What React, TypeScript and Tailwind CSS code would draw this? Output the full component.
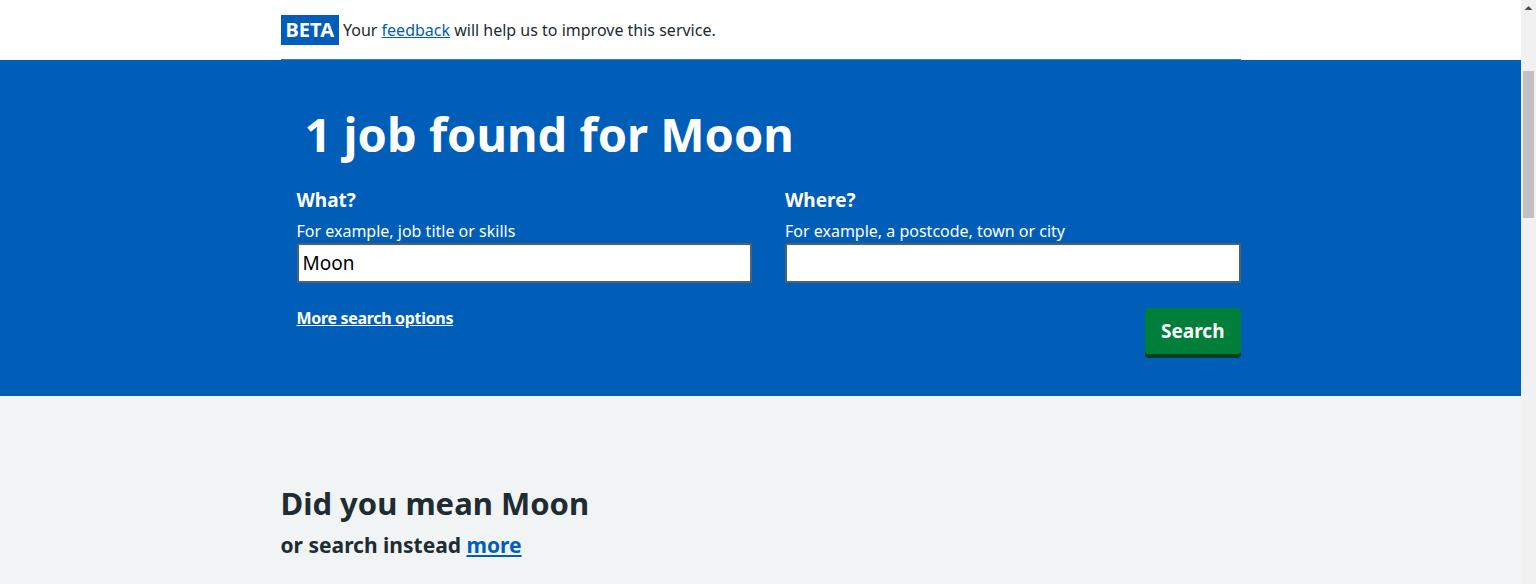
export default function App() {
  return (
    <div
      className="flex text-[#212b32]"
      style={{ fontFamily: '"Noto Sans", Arial, sans-serif' }}
    >
      <div className="min-h-[2180px] flex-1 bg-[#f0f4f5]">
        <header className="bg-white">
          <div className="mx-auto flex h-[60px] max-w-[960px] items-center border-b border-[#3b7bc4]">
            <strong className="mr-[4px] flex h-[30px] items-center bg-[#005eb8] px-[5px] text-[20px] font-bold leading-none text-white">
              BETA
            </strong>
            <p className="text-[16px] leading-none">
              Your{" "}
              <a href="#" className="text-[#005eb8] underline">
                feedback
              </a>{" "}
              will help us to improve this service.
            </p>
          </div>
        </header>

        <section className="bg-[#005eb8] text-white">
          <div className="mx-auto max-w-[960px] pb-[42px] pl-4 pt-[46px]">
            <h1 className="pl-2 text-[47px] font-bold leading-[1.2]">
              1 job found for Moon
            </h1>

            <form className="mt-[25px] grid grid-cols-2 gap-x-[33px]">
              <div>
                <label className="block text-[19px] font-bold leading-[1.4]">
                  What?
                </label>
                <span className="mt-[5px] block text-[16px] leading-[1.5]">
                  For example, job title or skills
                </span>
                <input
                  type="text"
                  defaultValue="Moon"
                  className="h-[40px] w-full border-2 border-[#4c6272] bg-white px-1 text-[19px] text-black outline-none"
                />
                <a
                  href="#"
                  className="mt-[23px] inline-block text-[16px] font-bold tracking-[-0.02em] underline"
                >
                  More search options
                </a>
              </div>
              <div>
                <label className="block text-[19px] font-bold leading-[1.4]">
                  Where?
                </label>
                <span className="mt-[5px] block text-[16px] leading-[1.5]">
                  For example, a postcode, town or city
                </span>
                <input
                  type="text"
                  className="h-[40px] w-full border-2 border-[#4c6272] bg-white px-1 text-[19px] text-black outline-none"
                />
                <div className="mt-[25px] flex justify-end">
                  <button
                    type="button"
                    className="h-[46px] rounded-[4px] bg-[#007f3b] px-[16px] text-[19px] font-bold text-white shadow-[0_4px_0_#00401e]"
                  >
                    Search
                  </button>
                </div>
              </div>
            </form>
          </div>
        </section>

        <main className="mx-auto max-w-[960px] pt-[88px]">
          <h2 className="text-[31px] font-bold leading-[1.25]">
            Did you mean Moon
          </h2>
          <p className="mt-[8px] text-[21px] font-bold leading-[1.4]">
            or search instead{" "}
            <a href="#" className="text-[#005eb8] underline">
              more
            </a>
          </p>
        </main>
      </div>

      {/* browser scrollbar as seen in the screenshot */}
      <aside className="sticky top-0 flex h-[584px] w-[15px] flex-col items-center bg-[#f1f1f1]">
        <svg width="15" height="17" viewBox="0 0 15 17" className="shrink-0">
          <path d="M3.5 10 L7.5 6 L11.5 10 Z" fill="#505050" />
        </svg>
        <div className="mt-[54px] h-[147px] w-[11px] bg-[#c1c1c1]" />
      </aside>
    </div>
  );
}
